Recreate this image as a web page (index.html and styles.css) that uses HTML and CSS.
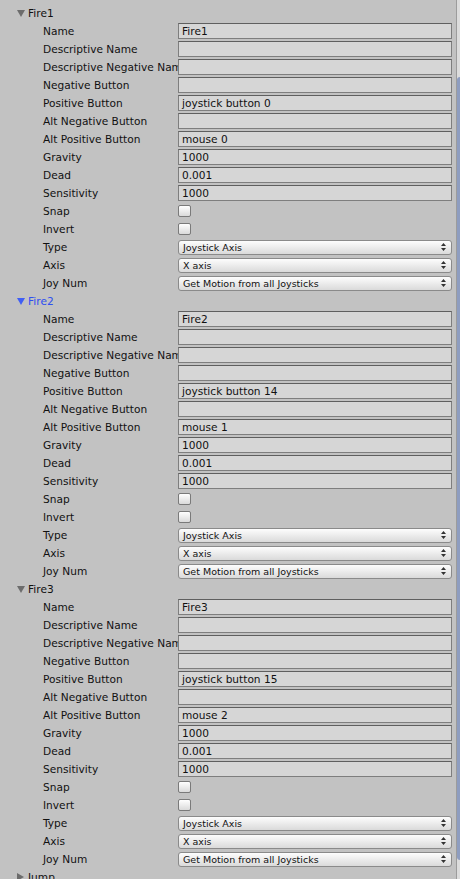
FILE: index.html
```html
<!DOCTYPE html>
<html>
<head>
<meta charset="utf-8">
<link rel="stylesheet" href="styles.css">
</head>
<body>
<div class="window">
  <div class="content">
    <section class="axis">
      <div class="head"><svg class="tri" width="8" height="7" viewBox="0 0 8 7"><path d="M0 0H8L4 7Z"/></svg><span>Fire1</span></div>
      <div class="row"><span class="label">Name</span><span class="field">Fire1</span></div>
      <div class="row"><span class="label">Descriptive Name</span><span class="field"></span></div>
      <div class="row"><span class="label">Descriptive Negative Name</span><span class="field"></span></div>
      <div class="row"><span class="label">Negative Button</span><span class="field"></span></div>
      <div class="row"><span class="label">Positive Button</span><span class="field">joystick button 0</span></div>
      <div class="row"><span class="label">Alt Negative Button</span><span class="field"></span></div>
      <div class="row"><span class="label">Alt Positive Button</span><span class="field">mouse 0</span></div>
      <div class="row"><span class="label">Gravity</span><span class="field">1000</span></div>
      <div class="row"><span class="label">Dead</span><span class="field">0.001</span></div>
      <div class="row"><span class="label">Sensitivity</span><span class="field">1000</span></div>
      <div class="row"><span class="label">Snap</span><span class="check"></span></div>
      <div class="row"><span class="label">Invert</span><span class="check"></span></div>
      <div class="row"><span class="label">Type</span><span class="popup"><span>Joystick Axis</span><svg class="updown" width="5" height="8" viewBox="0 0 5 8"><path d="M2.5 0L5 3H0Z M0 5H5L2.5 8Z"/></svg></span></div>
      <div class="row"><span class="label">Axis</span><span class="popup"><span>X axis</span><svg class="updown" width="5" height="8" viewBox="0 0 5 8"><path d="M2.5 0L5 3H0Z M0 5H5L2.5 8Z"/></svg></span></div>
      <div class="row"><span class="label">Joy Num</span><span class="popup"><span>Get Motion from all Joysticks</span><svg class="updown" width="5" height="8" viewBox="0 0 5 8"><path d="M2.5 0L5 3H0Z M0 5H5L2.5 8Z"/></svg></span></div>
    </section>
    <section class="axis">
      <div class="head selected"><svg class="tri" width="8" height="7" viewBox="0 0 8 7"><path d="M0 0H8L4 7Z"/></svg><span>Fire2</span></div>
      <div class="row"><span class="label">Name</span><span class="field">Fire2</span></div>
      <div class="row"><span class="label">Descriptive Name</span><span class="field"></span></div>
      <div class="row"><span class="label">Descriptive Negative Name</span><span class="field"></span></div>
      <div class="row"><span class="label">Negative Button</span><span class="field"></span></div>
      <div class="row"><span class="label">Positive Button</span><span class="field">joystick button 14</span></div>
      <div class="row"><span class="label">Alt Negative Button</span><span class="field"></span></div>
      <div class="row"><span class="label">Alt Positive Button</span><span class="field">mouse 1</span></div>
      <div class="row"><span class="label">Gravity</span><span class="field">1000</span></div>
      <div class="row"><span class="label">Dead</span><span class="field">0.001</span></div>
      <div class="row"><span class="label">Sensitivity</span><span class="field">1000</span></div>
      <div class="row"><span class="label">Snap</span><span class="check"></span></div>
      <div class="row"><span class="label">Invert</span><span class="check"></span></div>
      <div class="row"><span class="label">Type</span><span class="popup"><span>Joystick Axis</span><svg class="updown" width="5" height="8" viewBox="0 0 5 8"><path d="M2.5 0L5 3H0Z M0 5H5L2.5 8Z"/></svg></span></div>
      <div class="row"><span class="label">Axis</span><span class="popup"><span>X axis</span><svg class="updown" width="5" height="8" viewBox="0 0 5 8"><path d="M2.5 0L5 3H0Z M0 5H5L2.5 8Z"/></svg></span></div>
      <div class="row"><span class="label">Joy Num</span><span class="popup"><span>Get Motion from all Joysticks</span><svg class="updown" width="5" height="8" viewBox="0 0 5 8"><path d="M2.5 0L5 3H0Z M0 5H5L2.5 8Z"/></svg></span></div>
    </section>
    <section class="axis">
      <div class="head"><svg class="tri" width="8" height="7" viewBox="0 0 8 7"><path d="M0 0H8L4 7Z"/></svg><span>Fire3</span></div>
      <div class="row"><span class="label">Name</span><span class="field">Fire3</span></div>
      <div class="row"><span class="label">Descriptive Name</span><span class="field"></span></div>
      <div class="row"><span class="label">Descriptive Negative Name</span><span class="field"></span></div>
      <div class="row"><span class="label">Negative Button</span><span class="field"></span></div>
      <div class="row"><span class="label">Positive Button</span><span class="field">joystick button 15</span></div>
      <div class="row"><span class="label">Alt Negative Button</span><span class="field"></span></div>
      <div class="row"><span class="label">Alt Positive Button</span><span class="field">mouse 2</span></div>
      <div class="row"><span class="label">Gravity</span><span class="field">1000</span></div>
      <div class="row"><span class="label">Dead</span><span class="field">0.001</span></div>
      <div class="row"><span class="label">Sensitivity</span><span class="field">1000</span></div>
      <div class="row"><span class="label">Snap</span><span class="check"></span></div>
      <div class="row"><span class="label">Invert</span><span class="check"></span></div>
      <div class="row"><span class="label">Type</span><span class="popup"><span>Joystick Axis</span><svg class="updown" width="5" height="8" viewBox="0 0 5 8"><path d="M2.5 0L5 3H0Z M0 5H5L2.5 8Z"/></svg></span></div>
      <div class="row"><span class="label">Axis</span><span class="popup"><span>X axis</span><svg class="updown" width="5" height="8" viewBox="0 0 5 8"><path d="M2.5 0L5 3H0Z M0 5H5L2.5 8Z"/></svg></span></div>
      <div class="row"><span class="label">Joy Num</span><span class="popup"><span>Get Motion from all Joysticks</span><svg class="updown" width="5" height="8" viewBox="0 0 5 8"><path d="M2.5 0L5 3H0Z M0 5H5L2.5 8Z"/></svg></span></div>
    </section>
    <div class="head"><svg class="tri" width="8" height="8" viewBox="0 0 8 8"><path d="M0 0L7 4L0 8Z"/></svg><span>Jump</span></div>
  </div>
  <div class="scroll"><div class="thumb"></div></div>
</div>
</body>
</html>
```

FILE: styles.css
```css
html, body {
  margin: 0;
  padding: 0;
  height: 879px;
  overflow: hidden;
  background: #c2c2c2;
}
body {
  font-family: "DejaVu Sans", "Liberation Sans", sans-serif;
  font-size: 10.6px;
  color: #111;
}
.window {
  display: flex;
  height: 879px;
}
.content {
  flex: 0 0 456px;
  padding-top: 4px;
}
.scroll {
  flex: 0 0 3px;
  border-left: 1px solid #9c9c9c;
  background: #dcdcdc;
  display: flex;
  flex-direction: column;
}
.thumb {
  margin-top: 77px;
  height: 783px;
  background: #8e9dc0;
  border-radius: 3px 0 0 3px;
}
.head {
  display: flex;
  align-items: center;
  height: 18px;
  padding-left: 17px;
  gap: 3px;
  color: #111;
}
.tri {
  fill: #6c6c6c;
  flex: none;
}
.head.selected {
  color: #2f4ff0;
}
.head.selected .tri {
  fill: #3f5ef5;
}
.row {
  display: flex;
  align-items: center;
  height: 18px;
}
.label {
  box-sizing: border-box;
  flex: none;
  width: 178px;
  padding-left: 43px;
  white-space: nowrap;
  overflow: hidden;
}
.field {
  box-sizing: border-box;
  width: 274px;
  height: 16px;
  border: 1px solid #7e7e7e;
  border-top-color: #5f5f5f;
  background: #d6d6d6;
  padding-left: 3px;
  line-height: 14px;
  white-space: nowrap;
}
.check {
  box-sizing: border-box;
  width: 13px;
  height: 12px;
  border: 1px solid #7a7a7a;
  border-radius: 2px;
  background: linear-gradient(#ffffff, #dadada);
}
.popup {
  box-sizing: border-box;
  width: 274px;
  height: 15px;
  border: 1px solid #8a8a8a;
  border-radius: 3px;
  background: linear-gradient(#fdfdfd, #dadada);
  display: flex;
  align-items: center;
  justify-content: space-between;
  padding: 0 5px 0 4px;
  font-size: 9.5px;
}
.updown {
  fill: #333;
  flex: none;
}
```
